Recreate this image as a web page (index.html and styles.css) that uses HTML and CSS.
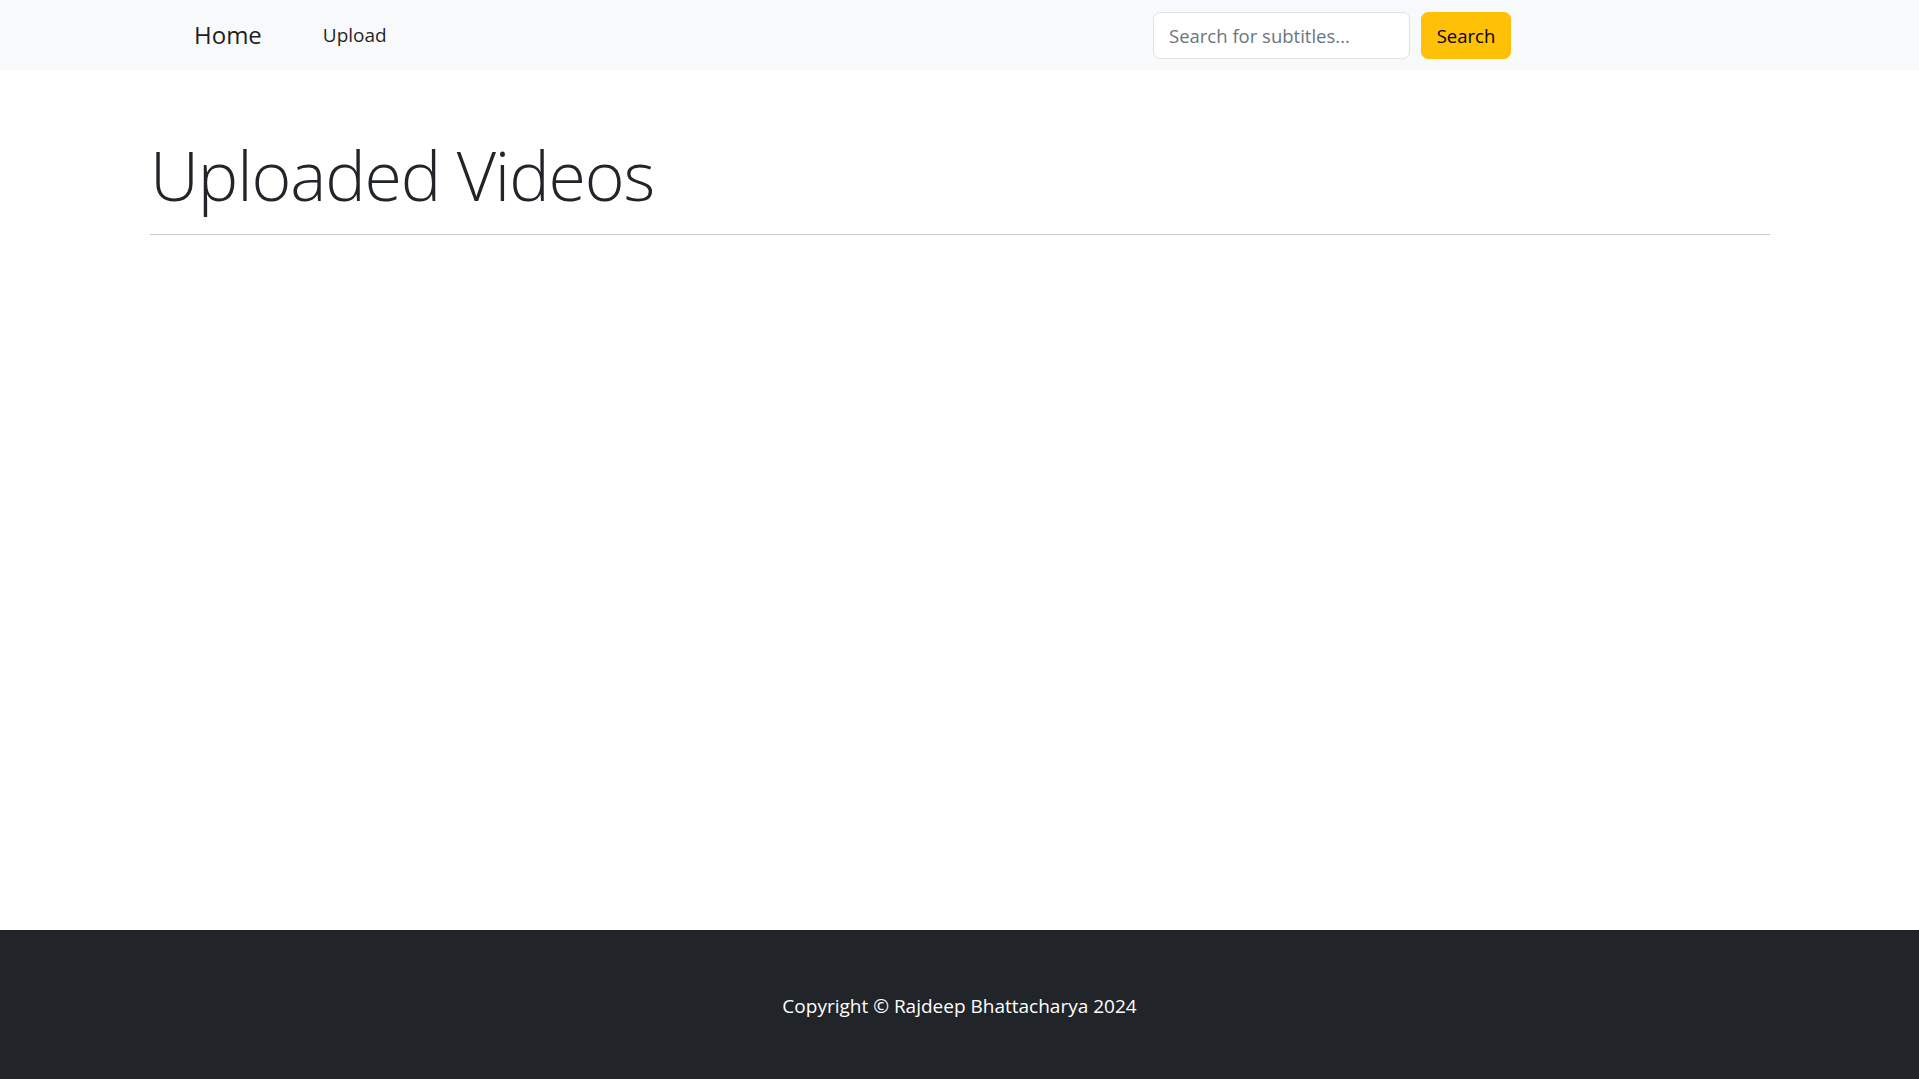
FILE: index.html
```html
<!DOCTYPE html>
<html lang="en">
<head>
<meta charset="utf-8">
<title>Uploaded Videos</title>
<link rel="stylesheet" href="styles.css">
</head>
<body>
<nav class="navbar">
  <div class="nav-left">
    <a class="brand" href="#">Home</a>
    <a class="nav-link" href="#">Upload</a>
  </div>
  <form class="search-form">
    <input class="search-input" type="search" placeholder="Search for subtitles...">
    <button class="search-btn" type="button">Search</button>
  </form>
</nav>
<main class="main">
  <h1 class="page-title">Uploaded Videos</h1>
  <hr class="divider">
</main>
<footer class="footer">
  <p class="copyright">Copyright © Rajdeep Bhattacharya 2024</p>
</footer>
</body>
</html>
```
FILE: styles.css
```css
* { box-sizing: border-box; }
html, body { margin: 0; padding: 0; }
body {
  font-family: "Open Sans", "Noto Sans", sans-serif;
  color: #212529;
  background: #fff;
  min-height: 100vh;
  display: flex;
  flex-direction: column;
}
.navbar {
  height: 70px;
  background: #f8f9fa;
  display: flex;
  align-items: center;
  justify-content: space-between;
  padding: 0 408px 0 194px;
}
.nav-left {
  display: flex;
  align-items: center;
  gap: 61px;
}
.brand {
  font-size: 24px;
  line-height: 36px;
  color: rgba(0, 0, 0, 0.9);
  text-decoration: none;
}
.nav-link {
  font-size: 19px;
  line-height: 30px;
  color: rgba(0, 0, 0, 0.88);
  text-decoration: none;
}
.search-form {
  display: flex;
  align-items: center;
  gap: 11px;
  margin: 0;
}
.search-input {
  width: 257px;
  height: 47px;
  padding: 0 15px;
  font-family: inherit;
  font-size: 18.5px;
  color: #212529;
  background: #fff;
  border: 1px solid #dee2e6;
  border-radius: 7px;
  outline: none;
}
.search-input::placeholder { color: #6c757d; }
.search-btn {
  width: 90px;
  height: 47px;
  padding: 0;
  font-family: inherit;
  font-size: 18.5px;
  color: #000;
  background: #ffc107;
  border: 1px solid #ffc107;
  border-radius: 7px;
}
.main {
  flex: 1;
  padding: 0 149px 0 150px;
}
.page-title {
  margin: 64px 0 0;
  font-size: 68px;
  font-weight: 300;
  letter-spacing: -1.1px;
  line-height: 1.2;
}
.divider {
  margin: 18px 0 0;
  border: 0;
  border-top: 1px solid #c8c9ca;
  height: 0;
}
.footer {
  background: #212529;
  color: #fff;
  height: 149px;
  padding-top: 61px;
  text-align: center;
}
.copyright {
  margin: 0;
  font-size: 19px;
  line-height: 30px;
}
```
